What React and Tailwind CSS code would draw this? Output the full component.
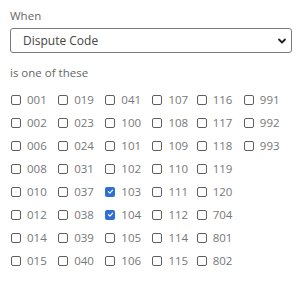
import React from "react";

const cols = [
  ["001", "002", "006", "008", "010", "012", "014", "015"],
  ["019", "023", "024", "031", "037", "038", "039", "040"],
  ["041", "100", "101", "102", "103", "104", "105", "106"],
  ["107", "108", "109", "110", "111", "112", "114", "115"],
  ["116", "117", "118", "119", "120", "704", "801", "802"],
  ["991", "992", "993"],
];
const checked = new Set(["103", "104"]);

function Box({ on }) {
  if (on) {
    return (
      <span className="w-[10px] h-[10px] rounded-[2px] bg-[#2f6fd3] flex items-center justify-center shrink-0">
        <svg width="7" height="7" viewBox="0 0 10 10" fill="none">
          <path d="M2 5.2 L4.2 7.3 L8 3" stroke="white" strokeWidth="1.6" strokeLinecap="round" strokeLinejoin="round" />
        </svg>
      </span>
    );
  }
  return <span className="w-[10px] h-[10px] rounded-[2px] border-[1.5px] border-[#5f5f5f] shrink-0" />;
}

export default function App() {
  return (
    <div className="w-[300px] h-[290px] bg-white px-[10px] pt-[9px] text-[#666]" style={{ fontFamily: "'Open Sans', 'Noto Sans', sans-serif" }}>
      <div className="text-[11.5px] leading-[14px]">When</div>
      <div className="mt-[5px] h-[25px] w-[282px] border border-[#7a7a7a] rounded-[3px] flex items-center justify-between pl-[12px] pr-[4px]">
        <span className="text-[12px] text-[#444]">Dispute Code</span>
        <svg width="10" height="10" viewBox="0 0 10 10" fill="none">
          <path d="M2 3.5 L5 6.5 L8 3.5" stroke="#222" strokeWidth="1.8" strokeLinecap="round" strokeLinejoin="round" />
        </svg>
      </div>
      <div className="mt-[13px] text-[11.5px] leading-[14px]">is one of these</div>
      <div className="mt-[8px] flex">
        {cols.map((c, i) => (
          <div key={i} className={"flex flex-col " + (i === 3 ? "w-[45px]" : "w-[48px]")}>
            {c.map((code) => (
              <label key={code} className="h-[23px] flex items-center gap-[6px] pl-[1px]">
                <Box on={checked.has(code)} />
                <span className="text-[11.5px] text-[#777]">{code}</span>
              </label>
            ))}
          </div>
        ))}
      </div>
    </div>
  );
}
